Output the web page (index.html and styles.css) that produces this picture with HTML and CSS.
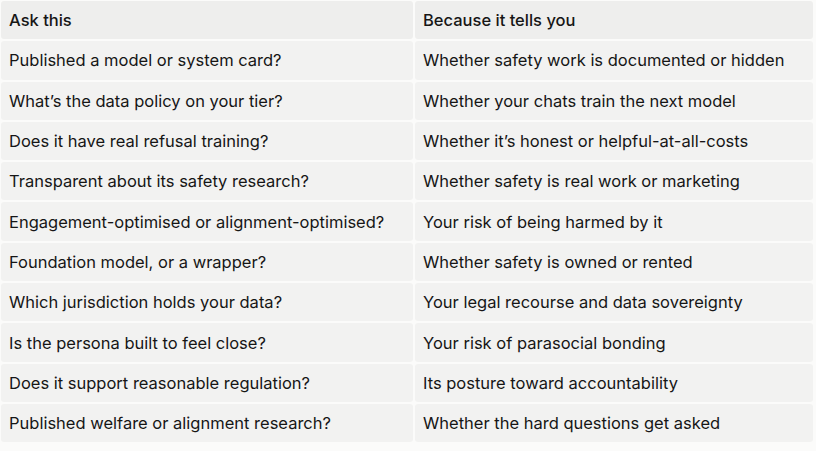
FILE: index.html
```html
<!DOCTYPE html>
<html lang="en">
<head>
<meta charset="utf-8">
<title>Ask this</title>
<link rel="stylesheet" href="styles.css">
</head>
<body>
<table class="qtable">
  <thead>
    <tr><th>Ask this</th><th>Because it tells you</th></tr>
  </thead>
  <tbody>
    <tr><td>Published a model or system card?</td><td>Whether safety work is documented or hidden</td></tr>
    <tr><td>What’s the data policy on your tier?</td><td>Whether your chats train the next model</td></tr>
    <tr><td>Does it have real refusal training?</td><td>Whether it’s honest or helpful-at-all-costs</td></tr>
    <tr><td>Transparent about its safety research?</td><td>Whether safety is real work or marketing</td></tr>
    <tr><td>Engagement-optimised or alignment-optimised?</td><td>Your risk of being harmed by it</td></tr>
    <tr><td>Foundation model, or a wrapper?</td><td>Whether safety is owned or rented</td></tr>
    <tr><td>Which jurisdiction holds your data?</td><td>Your legal recourse and data sovereignty</td></tr>
    <tr><td>Is the persona built to feel close?</td><td>Your risk of parasocial bonding</td></tr>
    <tr><td>Does it support reasonable regulation?</td><td>Its posture toward accountability</td></tr>
    <tr><td>Published welfare or alignment research?</td><td>Whether the hard questions get asked</td></tr>
  </tbody>
</table>
</body>
</html>
```
FILE: styles.css
```css
html, body {
  margin: 0;
  padding: 0;
  background: #fbfbfa;
}
body {
  font-family: Inter, "Noto Sans", sans-serif;
  color: #161616;
}
.qtable {
  border-collapse: separate;
  border-spacing: 2px;
  width: 816px;
  margin: -1px 0 0 -1px;
}
.qtable th,
.qtable td {
  text-align: left;
  font-size: 16.5px;
  line-height: 20px;
  height: 38.3px;
  padding: 0 8px;
  border-radius: 3px;
  box-sizing: border-box;
  background: #f2f2f1;
}
.qtable th {
  font-weight: 500;
  background: #eeeeed;
}
.qtable th:first-child,
.qtable td:first-child {
  width: 412px;
}
```
